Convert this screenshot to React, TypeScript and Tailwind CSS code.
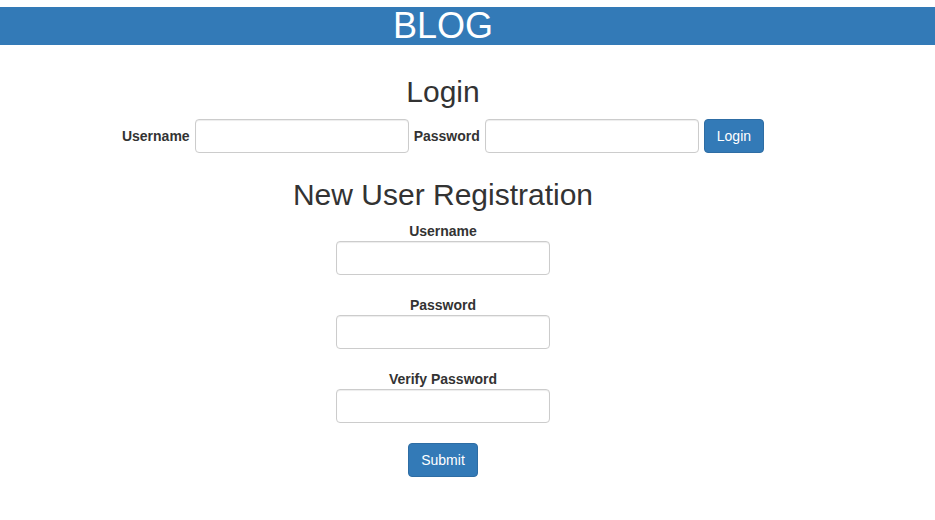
export default function App() {
  const font = { fontFamily: '"Liberation Sans", Arial, Helvetica, sans-serif' };
  const inputCls =
    "block h-[34px] w-[214px] rounded-[4px] border border-[#cccccc] bg-white px-3 text-[14px] text-[#555] shadow-[inset_0_1px_1px_rgba(0,0,0,0.075)] outline-none";
  const btnCls =
    "h-[34px] rounded-[4px] border border-[#2e6da4] bg-[#337ab7] px-3 text-[14px] leading-[20px] text-white";
  return (
    <div style={font} className="min-h-[520px] bg-white text-[#333333]">
      <div className="h-[7px]" />
      <div className="h-[38px] bg-[#337ab7]">
        <div className="w-[886px] text-center text-[36px] leading-[38px] text-white">BLOG</div>
      </div>
      <div className="flex w-[886px] flex-col items-center">
        <h2 className="mt-[30px] text-[30px] leading-[33px]">Login</h2>
        <div className="mt-[11px] flex h-[34px] items-center gap-[5px]">
          <label className="text-[14px] font-bold leading-[20px]">Username</label>
          <input className={inputCls} />
          <label className="text-[14px] font-bold leading-[20px]">Password</label>
          <input type="password" className={inputCls} />
          <button className={btnCls}>Login</button>
        </div>
        <h2 className="mt-[25px] text-[30px] leading-[33px]">New User Registration</h2>
        <div className="mt-[10px] flex flex-col items-center">
          <label className="text-[14px] font-bold leading-[20px]">Username</label>
          <input className={inputCls} />
        </div>
        <div className="mt-[20px] flex flex-col items-center">
          <label className="text-[14px] font-bold leading-[20px]">Password</label>
          <input type="password" className={inputCls} />
        </div>
        <div className="mt-[20px] flex flex-col items-center">
          <label className="text-[14px] font-bold leading-[20px]">Verify Password</label>
          <input type="password" className={inputCls} />
        </div>
        <button className={"mt-[20px] " + btnCls}>Submit</button>
      </div>
    </div>
  );
}
